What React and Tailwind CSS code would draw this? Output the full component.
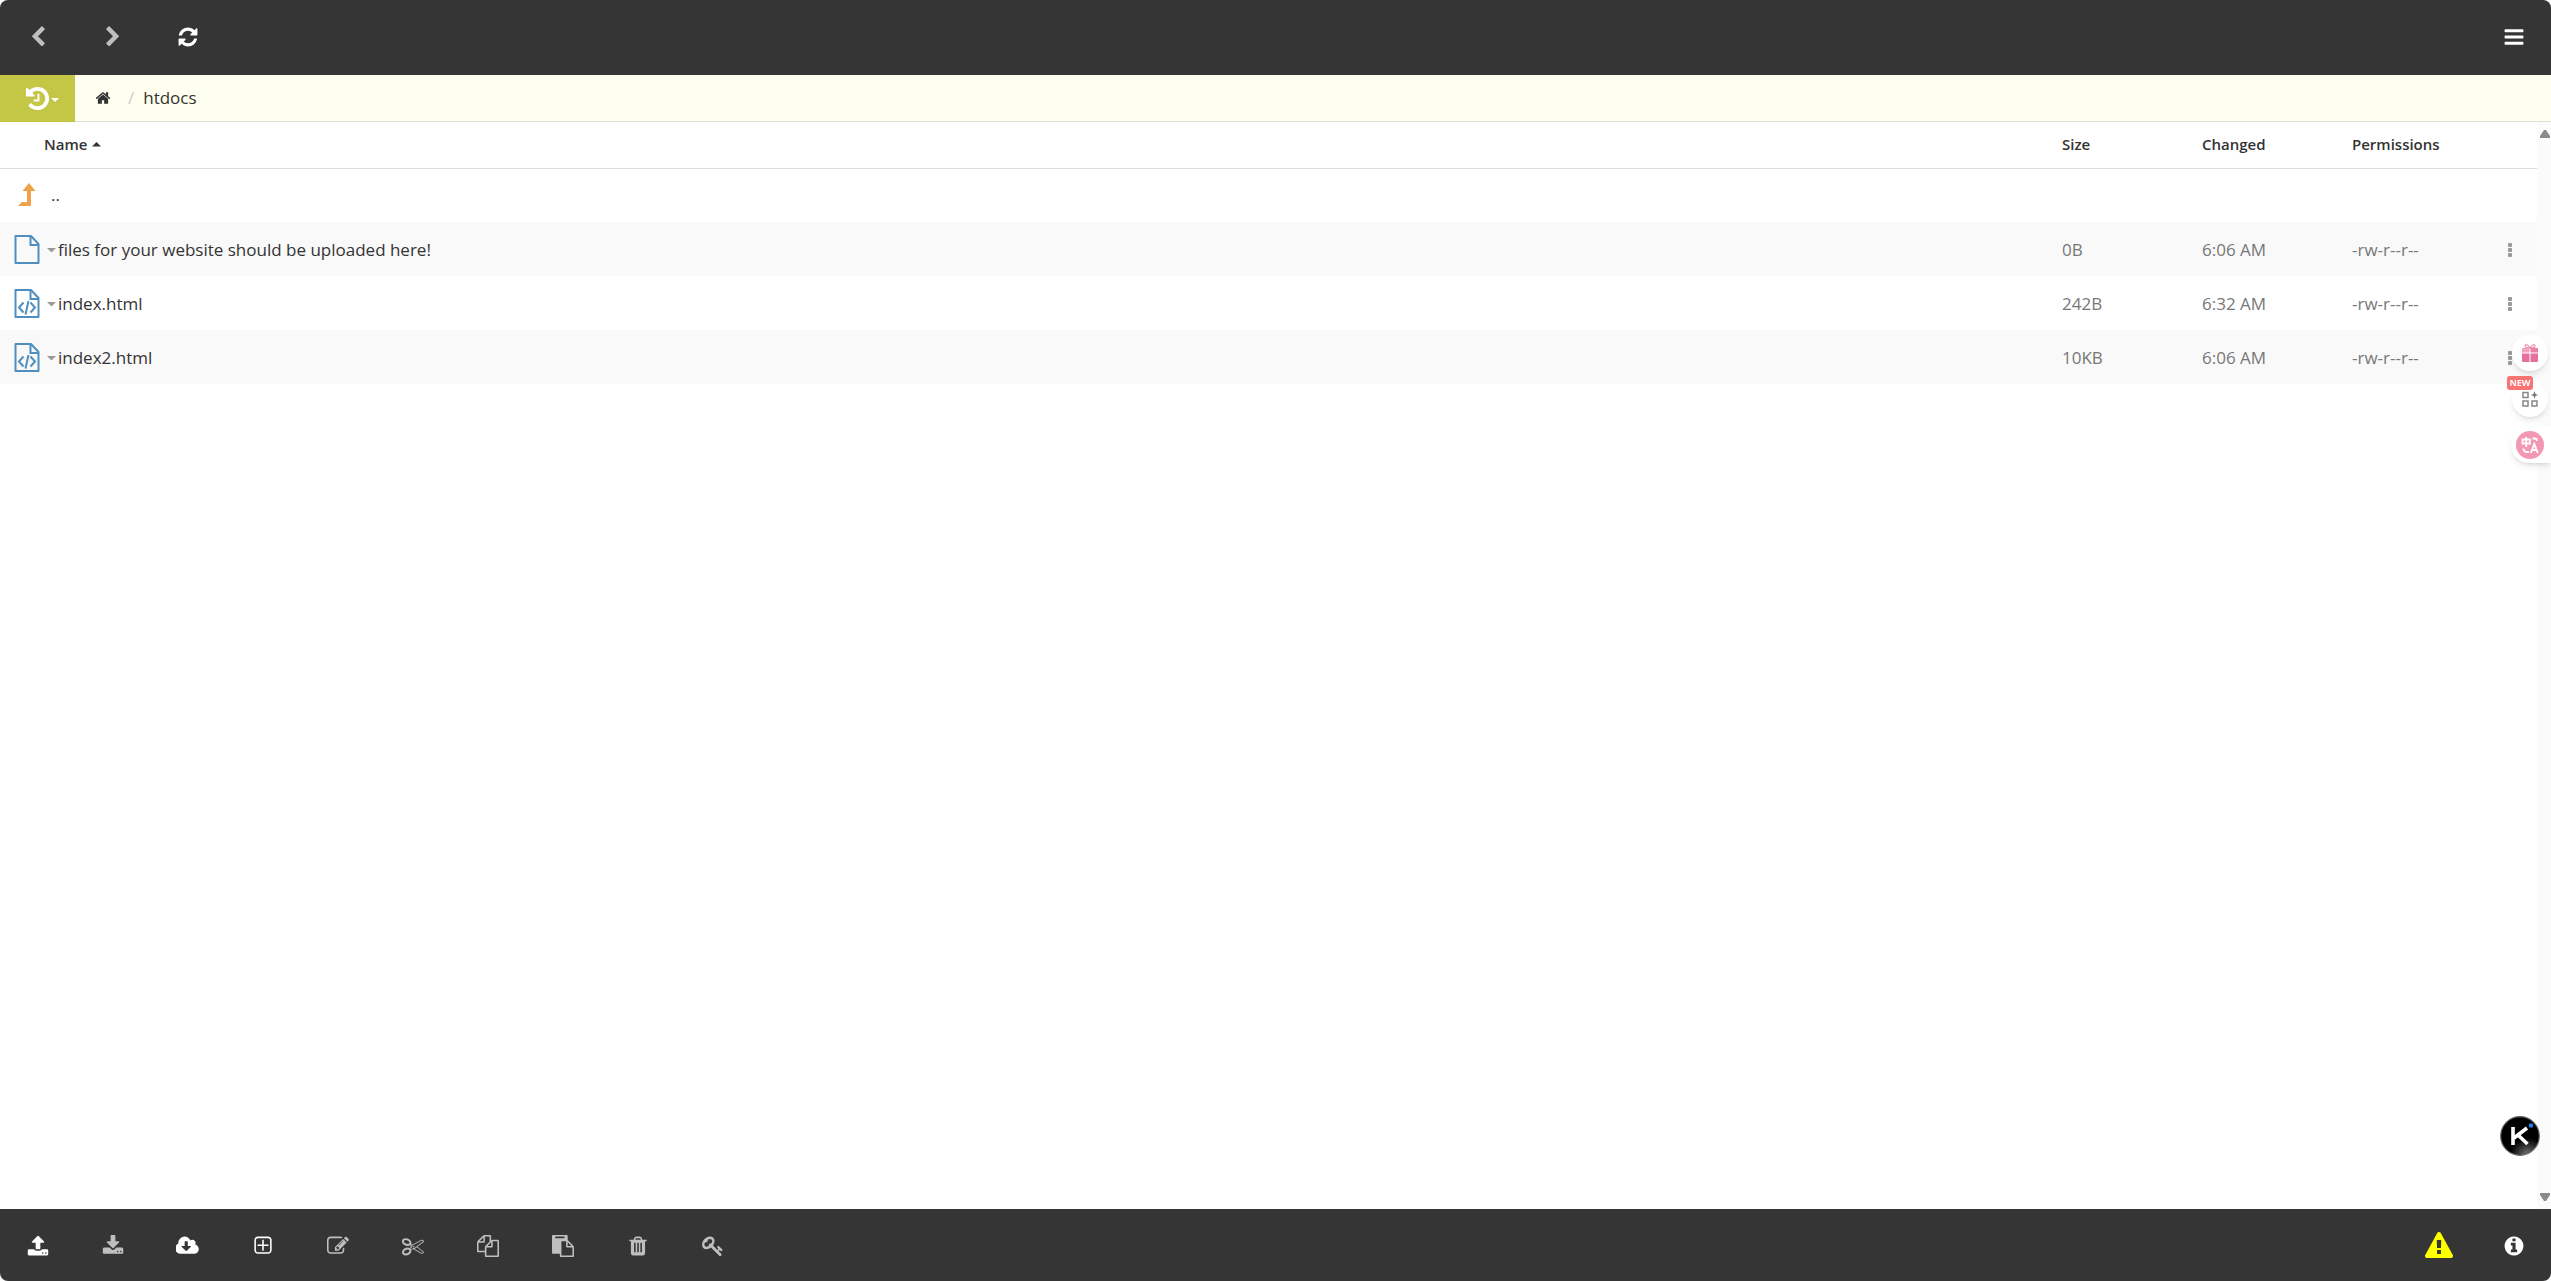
const ICONS = {
  left: "M1427 301l-531 531 531 531q19 19 19 45t-19 45l-166 166q-19 19-45 19t-45-19l-742-742q-19-19-19-45t19-45l742-742q19-19 45-19t45 19l166 166q19 19 19 45t-19 45z",
  right: "M1363 877l-742 742q-19 19-45 19t-45-19l-166-166q-19-19-19-45t19-45l531-531-531-531q-19-19-19-45t19-45l166-166q19-19 45-19t45 19l742 742q19 19 19 45t-19 45z",
  refresh: "M1639 1056q0 5-1 7-64 268-268 434.5t-478 166.5q-146 0-282.5-55t-243.5-157l-129 129q-19 19-45 19t-45-19-19-45v-448q0-26 19-45t45-19h448q26 0 45 19t19 45-19 45l-137 137q71 66 161 102t187 36q134 0 250-65t186-179q11-17 53-117 8-23 30-23h192q13 0 22.5 9.5t9.5 22.5zm25-800v448q0 26-19 45t-45 19h-448q-26 0-45-19t-19-45 19-45l138-138q-148-137-349-137-134 0-250 65t-186 179q-11 17-53 117-8 23-30 23h-199q-13 0-22.5-9.5t-9.5-22.5v-7q65-268 270-434.5t480-166.5q146 0 284 55.5t245 156.5l130-129q19-19 45-19t45 19 19 45z",
  menu: "M1664 1344v128q0 26-19 45t-45 19h-1408q-26 0-45-19t-19-45v-128q0-26 19-45t45-19h1408q26 0 45 19t19 45zm0-512v128q0 26-19 45t-45 19h-1408q-26 0-45-19t-19-45v-128q0-26 19-45t45-19h1408q26 0 45 19t19 45zm0-512v128q0 26-19 45t-45 19h-1408q-26 0-45-19t-19-45v-128q0-26 19-45t45-19h1408q26 0 45 19t19 45z",
  history: "M1664 896q0 156-61 298t-164 245-245 164-298 61q-172 0-327-72.5t-264-204.5q-7-10-6.5-22.5t8.5-20.5l137-138q10-9 25-9 16 2 23 12 73 95 179 147t225 52q104 0 198.5-40.5t163.5-109.5 109.5-163.5 40.5-198.5-40.5-198.5-109.5-163.5-163.5-109.5-198.5-40.5q-98 0-188 35.5t-160 101.5l137 138q31 30 14 69-17 40-59 40h-448q-26 0-45-19t-19-45v-448q0-42 40-59 39-17 69 14l130 129q107-101 244.5-156.5t284.5-55.5q156 0 298 61t245 164 164 245 61 298zm-640-288v448q0 14-9 23t-23 9h-320q-14 0-23-9t-9-23v-64q0-14 9-23t23-9h224v-352q0-14 9-23t23-9h64q14 0 23 9t9 23z",
  home: "M1472 992v480q0 26-19 45t-45 19h-384v-384h-256v384h-384q-26 0-45-19t-19-45v-480q0-1 .5-3t.5-3l575-474 575 474q1 2 1 6zm223-69l-62 74q-8 9-21 11h-3q-13 0-21-7l-692-577-692 577q-12 8-24 7-13-2-21-11l-62-74q-8-10-7-23.5t11-21.5l719-599q32-26 76-26t76 26l244 204v-195q0-14 9-23t23-9h192q14 0 23 9t9 23v408l219 182q10 8 11 21.5t-7 23.5z",
  upload: "M1344 1472q0-26-19-45t-45-19-45 19-19 45 19 45 45 19 45-19 19-45zm256 0q0-26-19-45t-45-19-45 19-19 45 19 45 45 19 45-19 19-45zm128-224v320q0 40-28 68t-68 28h-1472q-40 0-68-28t-28-68v-320q0-40 28-68t68-28h427q21 56 70.5 92t110.5 36h256q61 0 110.5-36t70.5-92h427q40 0 68 28t28 68zm-325-648q-17 40-59 40h-256v448q0 26-19 45t-45 19h-256q-26 0-45-19t-19-45v-448h-256q-42 0-59-40-17-39 14-69l448-448q18-19 45-19t45 19l448 448q31 30 14 69z",
  download: "M1344 1344q0-26-19-45t-45-19-45 19-19 45 19 45 45 19 45-19 19-45zm256 0q0-26-19-45t-45-19-45 19-19 45 19 45 45 19 45-19 19-45zm128-224v320q0 40-28 68t-68 28h-1472q-40 0-68-28t-28-68v-320q0-40 28-68t68-28h465l135 136q58 56 136 56t136-56l136-136h464q40 0 68 28t28 68zm-325-569q17 41-14 70l-448 448q-18 19-45 19t-45-19l-448-448q-31-29-14-70 17-39 59-39h256v-448q0-26 19-45t45-19h256q26 0 45 19t19 45v448h256q42 0 59 39z",
  cloud: "M1216 928q0-14-9-23t-23-9h-224v-352q0-13-9.5-22.5t-22.5-9.5h-192q-13 0-22.5 9.5t-9.5 22.5v352h-224q-13 0-22.5 9.5t-9.5 22.5q0 14 9 23l352 352q9 9 23 9t23-9l351-351q10-12 10-24zm640 224q0 159-112.5 271.5t-271.5 112.5h-1088q-185 0-316.5-131.5t-131.5-316.5q0-130 70-240t188-165q-2-30-2-43 0-212 150-362t362-150q156 0 285.5 87t188.5 231q71-62 166-62 106 0 181 75t75 181q0 76-41 138 130 31 213.5 135.5t83.5 238.5z",
  plus: "M1344 800v64q0 14-9 23t-23 9h-352v352q0 14-9 23t-23 9h-64q-14 0-23-9t-9-23v-352h-352q-14 0-23-9t-9-23v-64q0-14 9-23t23-9h352v-352q0-14 9-23t23-9h64q14 0 23 9t9 23v352h352q14 0 23 9t9 23zm128 448v-832q0-66-47-113t-113-47h-832q-66 0-113 47t-47 113v832q0 66 47 113t113 47h832q66 0 113-47t47-113zm128-832v832q0 119-84.5 203.5t-203.5 84.5h-832q-119 0-203.5-84.5t-84.5-203.5v-832q0-119 84.5-203.5t203.5-84.5h832q119 0 203.5 84.5t84.5 203.5z",
  edit: "M888 1184l116-116-152-152-116 116v56h96v96h56zm440-720q-16-16-33 1l-350 350q-17 17-1 33t33-1l350-350q17-17 1-33zm80 594v190q0 119-84.5 203.5t-203.5 84.5h-832q-119 0-203.5-84.5t-84.5-203.5v-832q0-119 84.5-203.5t203.5-84.5h832q63 0 117 25 15 7 18 23 3 17-9 29l-49 49q-14 14-32 8-23-6-45-6h-832q-66 0-113 47t-47 113v832q0 66 47 113t113 47h832q66 0 113-47t47-113v-126q0-13 9-22l64-64q15-15 35-7t20 29zm-96-738l288 288-672 672h-288v-288zm444 132l-92 92-288-288 92-92q28-28 68-28t68 28l152 152q28 28 28 68t-28 68z",
  cut: "M960 896q26 0 45 19t19 45-19 45-45 19-45-19-19-45 19-45 45-19zm300 64l507 398q28 20 25 56-5 35-35 51l-128 64q-13 7-29 7-17 0-31-8l-690-387-110 66q-8 4-12 5 14 49 10 97-7 77-56 147.5t-132 123.5q-132 84-277 84-136 0-222-78-90-84-79-207 7-76 56-147t131-124q132-84 278-84 83 0 151 31 9-13 22-22l122-73-122-73q-13-9-22-22-68 31-151 31-146 0-278-84-82-53-131-124t-56-147q-5-59 15.5-113t63.5-93q85-79 222-79 145 0 277 84 83 52 132 123t56 148q4 48-10 97 4 1 12 5l110 66 690-387q14-8 31-8 16 0 29 7l128 64q30 16 35 51 3 36-25 56zm-681-260q46-42 21-108t-106-117q-92-59-192-59-74 0-113 36-46 42-21 108t106 117q92 59 192 59 74 0 113-36zm-85 745q81-51 106-117t-21-108q-39-36-113-36-100 0-192 59-81 51-106 117t21 108q39 36 113 36 100 0 192-59zm178-613l96 58v-11q0-36 33-56l14-8-79-47-26 26q-3 3-10 11t-12 12q-2 2-4 3.5t-3 2.5zm224 224l96 32 736-576-128-64-768 431v113l-160 96 9 8q2 2 7 6 4 4 11 12t11 12l26 26zm704 416l128-64-520-408-177 138q-2 3-13 7z",
  copy: "M1696 384q40 0 68 28t28 68v1216q0 40-28 68t-68 28h-960q-40 0-68-28t-28-68v-288h-544q-40 0-68-28t-28-68v-672q0-40 20-88t48-76l408-408q28-28 76-48t88-20h416q40 0 68 28t28 68v328q68-40 128-40h416zm-544 213l-299 299h299v-299zm-640-384l-299 299h299v-299zm196 647l316-316v-416h-384v416q0 40-28 68t-68 28h-416v640h512v-256q0-40 20-88t48-76zm956 804v-1152h-384v416q0 40-28 68t-68 28h-416v640h896z",
  paste: "M768 1664h896v-640h-416q-40 0-68-28t-28-68v-416h-384v1152zm256-1440v-64q0-13-9.5-22.5t-22.5-9.5h-704q-13 0-22.5 9.5t-9.5 22.5v64q0 13 9.5 22.5t22.5 9.5h704q13 0 22.5-9.5t9.5-22.5zm256 672h299l-299-299v299zm512 128v672q0 40-28 68t-68 28h-960q-40 0-68-28t-28-68v-160h-544q-40 0-68-28t-28-68v-1344q0-40 28-68t68-28h1088q40 0 68 28t28 68v328q21 13 36 28l408 408q28 28 48 76t20 88z",
  trash: "M704 1376v-704q0-14-9-23t-23-9h-64q-14 0-23 9t-9 23v704q0 14 9 23t23 9h64q14 0 23-9t9-23zm256 0v-704q0-14-9-23t-23-9h-64q-14 0-23 9t-9 23v704q0 14 9 23t23 9h64q14 0 23-9t9-23zm256 0v-704q0-14-9-23t-23-9h-64q-14 0-23 9t-9 23v704q0 14 9 23t23 9h64q14 0 23-9t9-23zm-544-992h448l-48-117q-7-9-17-11h-317q-10 2-17 11zm928 32v64q0 14-9 23t-23 9h-96v948q0 83-47 143.5t-113 60.5h-832q-66 0-113-58.5t-47-141.5v-952h-96q-14 0-23-9t-9-23v-64q0-14 9-23t23-9h309l70-167q15-37 54-63t79-26h320q40 0 79 26t54 63l70 167h309q14 0 23 9t9 23z",
  key: "M832 512q0-80-56-136t-136-56-136 56-56 136q0 42 19 83-41-19-83-19-80 0-136 56t-56 136 56 136 136 56 136-56 56-136q0-42-19-83 41 19 83 19 80 0 136-56t56-136zm851 704q0 17-49 66t-66 49q-9 0-28.5-16t-36.5-33-38.5-40-24.5-26l-96 96 220 220q28 28 28 68 0 42-39 81t-81 39q-40 0-68-28l-671-671q-176 131-365 131-163 0-265.5-102.5t-102.5-265.5q0-160 95-313t248-248 313-95q163 0 265.5 102.5t102.5 265.5q0 189-131 365l355 355 96-96q-3-3-26-24.5t-40-38.5-33-36.5-16-28.5q0-17 49-66t66-49q13 0 23 10 6 6 46 44.5t82 79.5 86.5 86 73 78 28.5 41z",
  warning: "M1024 1375v-190q0-14-9.5-23.5t-22.5-9.5h-192q-13 0-22.5 9.5t-9.5 23.5v190q0 14 9.5 23.5t22.5 9.5h192q13 0 22.5-9.5t9.5-23.5zm-2-374l18-459q0-12-10-19-13-11-24-11h-220q-11 0-24 11-10 7-10 21l17 457q0 10 10 16.5t24 6.5h185q14 0 23.5-6.5t10.5-16.5zm-14-934l768 1408q35 63-2 126-17 29-46.5 46t-63.5 17h-1536q-34 0-63.5-17t-46.5-46q-37-63-2-126l768-1408q17-31 47-49t65-18 65 18 47 49z",
  info: "M1152 1376v-160q0-14-9-23t-23-9h-96v-512q0-14-9-23t-23-9h-320q-14 0-23 9t-9 23v160q0 14 9 23t23 9h96v320h-96q-14 0-23 9t-9 23v160q0 14 9 23t23 9h448q14 0 23-9t9-23zm-128-896v-160q0-14-9-23t-23-9h-192q-14 0-23 9t-9 23v160q0 14 9 23t23 9h192q14 0 23-9t9-23zm640 416q0 209-103 385.5t-279.5 279.5-385.5 103-385.5-103-279.5-279.5-103-385.5 103-385.5 279.5-279.5 385.5-103 385.5 103 279.5 279.5 103 385.5z",
};

const files = [
  { name: "files for your website should be uploaded here!", size: "0B", changed: "6:06 AM", permissions: "-rw-r--r--" },
  { name: "index.html", size: "242B", changed: "6:32 AM", permissions: "-rw-r--r--", code: true },
  { name: "index2.html", size: "10KB", changed: "6:06 AM", permissions: "-rw-r--r--", code: true },
];

const actions = [
  { icon: "upload", label: "Upload", active: true },
  { icon: "download", label: "Download" },
  { icon: "cloud", label: "Fetch file", active: true, box: "0 0 1856 1792" },
  { icon: "plus", label: "New", active: true },
  { icon: "edit", label: "Edit" },
  { icon: "cut", label: "Cut" },
  { icon: "copy", label: "Copy" },
  { icon: "paste", label: "Paste" },
  { icon: "trash", label: "Delete" },
  { icon: "key", label: "Permissions" },
];

const Icon = ({ name, box = "0 0 1792 1792", className = "h-[22px]" }) => (
  <svg viewBox={box} fill="currentColor" className={className} aria-hidden="true">
    <path d={ICONS[name]} />
  </svg>
);

const BarButton = ({ label, active, children }) => (
  <button
    type="button"
    aria-label={label}
    className={`flex w-[75px] items-center justify-center self-stretch ${active ? "text-white" : "text-[#bfbfbf]"}`}
  >
    {children}
  </button>
);

const Caret = ({ up, className }) => (
  <svg viewBox="0 0 10 5" className={className} fill="currentColor" aria-hidden="true">
    <path d={up ? "M0 5L5 0l5 5z" : "M0 0h10L5 5z"} />
  </svg>
);

const FileIcon = ({ code }) => (
  <svg viewBox="0 0 26 30" className="h-[30px] w-[26px]" fill="none" stroke="#4f8fc0" strokeWidth="2" aria-hidden="true">
    <path d="M1.5 1h15.500l7.500 8v19h-23z" strokeLinejoin="round" />
    <path d="M16.500 1v9h8" />
    {code && <path d="M9.500 13.500L5 18.500l4.500 5M16.500 13.500l4.500 5-4.500 5M14.500 12l-3 13.500" />}
  </svg>
);

const Toolbar = () => (
  <header className="flex h-[75px] shrink-0 bg-[#353535] pb-px">
    <BarButton label="Back">
      <Icon name="left" />
    </BarButton>
    <BarButton label="Forward">
      <Icon name="right" />
    </BarButton>
    <BarButton label="Refresh" active>
      <Icon name="refresh" />
    </BarButton>
    <div className="ml-auto flex">
      <BarButton label="Menu" active>
        <Icon name="menu" />
      </BarButton>
    </div>
  </header>
);

const Breadcrumb = () => (
  <nav className="flex h-[47px] shrink-0 bg-[#fffff0]">
    <button type="button" aria-label="History" className="flex w-[75px] items-center justify-center bg-[#c4c746] pl-2 pb-px text-white">
      <Icon name="history" className="h-[27px]" />
      <Caret className="mt-1 w-2" />
    </button>
    <div className="flex flex-1 items-center border-b border-[#dddddd] pl-5 text-[17px] text-[#333333]">
      <a href="#home" aria-label="Home">
        <Icon name="home" className="h-4" />
      </a>
      <span className="pr-[9px] pl-[17px] text-[#cccccc]">/</span>
      <a href="#htdocs">htdocs</a>
    </div>
  </nav>
);

const FileTable = () => (
  <table className="w-full table-fixed border-separate border-spacing-0 text-left text-[17px]">
    <colgroup>
      <col />
      <col className="w-[140px]" />
      <col className="w-[150px]" />
      <col className="w-[131px]" />
      <col className="w-[54px]" />
    </colgroup>
    <thead>
      <tr className="h-[47px] text-[15px] text-[#333333] *:border-b *:border-[#dddddd] *:pb-px *:font-semibold">
        <th className="pl-11">
          <button type="button" className="flex items-center gap-[5px]">
            Name
            <Caret up className="w-[9px]" />
          </button>
        </th>
        <th>Size</th>
        <th>Changed</th>
        <th>Permissions</th>
        <th aria-label="Actions"></th>
      </tr>
    </thead>
    <tbody>
      <tr className="h-[53px]">
        <td colSpan={5} className="pb-[2px] pl-[18px] text-[#333333]">
          <a href="#up" className="flex items-center gap-[15px]">
            <svg viewBox="0 0 18 24" className="h-6 w-[18px]" fill="#f0a34a" aria-hidden="true">
              <path d="M11 0l6.500 8H13v15H0l4-4h5V8H4.500z" />
            </svg>
            ..
          </a>
        </td>
      </tr>
      {files.map((file) => (
        <tr key={file.name} className="h-[54px] text-[#777777] odd:bg-white even:bg-[#f9f9f9] *:pt-[2px]">
          <td className="pl-[14px]">
            <div className="flex items-center">
              <FileIcon code={file.code} />
              <button type="button" aria-label={`Options for ${file.name}`} className="pr-[2px] pl-[7px] text-[#999999]">
                <Caret className="w-[9px]" />
              </button>
              <a href="#file" className="text-[#333333]">
                {file.name}
              </a>
            </div>
          </td>
          <td>{file.size}</td>
          <td>{file.changed}</td>
          <td>{file.permissions}</td>
          <td>
            <button type="button" aria-label={`More for ${file.name}`} className="mx-auto block text-[#999999]">
              <svg viewBox="0 0 4 14" className="h-[14px] w-1" fill="currentColor" aria-hidden="true">
                <rect width="4" height="4" rx="1" />
                <rect y="5" width="4" height="4" rx="1" />
                <rect y="10" width="4" height="4" rx="1" />
              </svg>
            </button>
          </td>
        </tr>
      ))}
    </tbody>
  </table>
);

const Footer = () => (
  <footer className="flex h-[72px] shrink-0 bg-[#353535] pt-[2px]">
    {actions.map((action) => (
      <BarButton key={action.label} label={action.label} active={action.active}>
        <Icon name={action.icon} box={action.box} />
      </BarButton>
    ))}
    <div className="ml-auto flex">
      <button type="button" aria-label="Warnings" className="flex w-[75px] items-center justify-center text-[#ffff00]">
        <Icon name="warning" className="h-7" />
      </button>
      <BarButton label="Info" active>
        <Icon name="info" />
      </BarButton>
    </div>
  </footer>
);

const SideWidgets = () => (
  <aside className="fixed top-[335px] right-0 flex flex-col items-end gap-[10px]">
    <button type="button" aria-label="Gift" className="mr-[3px] flex size-9 items-center justify-center rounded-full bg-white shadow-md">
      <svg viewBox="0 0 16 18" className="h-[18px] w-4" aria-hidden="true">
        <path d="M8 4C6 0 3 0 3 2s3 2 5 2c2 0 5 0 5-2S10 0 8 4z" fill="none" stroke="#ee8bac" strokeWidth="1.200" />
        <path d="M0 4h7.500v4.500H0z" fill="#f4a3bb" />
        <path d="M8.500 4H16v4.500H8.500z" fill="#ec80a8" />
        <path d="M0 9.500h7.500V18H1q-1 0-1-1zM8.500 9.500H16V17q0 1-1 1H8.500z" fill="#e470a0" />
      </svg>
    </button>
    <button type="button" aria-label="Apps" className="relative mr-[3px] flex size-9 items-center justify-center rounded-full bg-white shadow-md">
      <svg viewBox="0 0 16 16" className="size-4" fill="none" stroke="#888888" strokeWidth="1.500" aria-hidden="true">
        <path d="M1 1.500h5v5H1zM1 10h5v5H1zM10 10h5v5h-5z" />
        <path d="M12.500 0l1 3 2.500 1-2.500 1-1 3-1-3L9 4l2.500-1z" fill="#777777" stroke="none" />
      </svg>
      <span className="absolute -top-[5px] -left-[5px] flex h-[14px] w-[26px] items-center justify-center rounded-[3px] bg-[#fa7373] text-[9px] font-bold text-white">
        NEW
      </span>
    </button>
    <button type="button" aria-label="Translate" className="flex h-9 w-10 items-center rounded-l-full bg-white pl-[5px] shadow-md">
      <svg viewBox="0 0 28 28" className="size-7" fill="none" stroke="#ffffff" strokeWidth="1.800" aria-hidden="true">
        <circle cx="14" cy="14" r="14" fill="#f497b2" stroke="none" />
        <path d="M6.500 8.500h7.500v4H6.500zM10.200 6v10M16.500 7.500H19q2 0 2 2.500M7.500 17.500q0 3.500 3.500 3.500h2" />
        <path d="M14.800 22l3.500-9 3.500 9M16 19h4.700" />
      </svg>
    </button>
  </aside>
);

const ChatBubble = () => (
  <button type="button" aria-label="Assistant" className="fixed right-[11px] bottom-[125px] size-10">
    <svg viewBox="0 0 40 40" className="size-10" aria-hidden="true">
      <defs>
        <radialGradient id="moon" cx="0.700" cy="1" r="0.450">
          <stop offset="0" stopColor="#777777" />
          <stop offset="1" stopColor="#000000" />
        </radialGradient>
      </defs>
      <circle cx="20" cy="20" r="19.300" fill="url(#moon)" stroke="#666666" strokeWidth="1.200" />
      <path d="M13 11v18M27 12L14 22M18 19l9.500 9" fill="none" stroke="#ffffff" strokeWidth="3.600" />
      <rect x="29" y="7.500" width="4" height="4" rx="1" fill="#1684ff" />
    </svg>
  </button>
);

const App = () => {
  return (
    <div className="flex h-screen flex-col overflow-hidden rounded-lg bg-white font-['Open_Sans',sans-serif]">
      <Toolbar />
      <Breadcrumb />
      <main className="flex min-h-0 flex-1">
        <div className="flex-1">
          <FileTable />
        </div>
        <div className="flex w-[14px] flex-col items-center justify-between bg-[#fbfbfb] py-2 pl-px text-[#8a8a8a]">
          <svg viewBox="0 0 10 8" className="h-2 w-[10px]" fill="currentColor" aria-hidden="true">
            <path d="M4 0h2l4 6v2H0V6z" />
          </svg>
          <svg viewBox="0 0 10 8" className="h-2 w-[10px]" fill="currentColor" aria-hidden="true">
            <path d="M4 8h2l4-6V0H0v2z" />
          </svg>
        </div>
      </main>
      <Footer />
      <SideWidgets />
      <ChatBubble />
    </div>
  );
};

export default App;
